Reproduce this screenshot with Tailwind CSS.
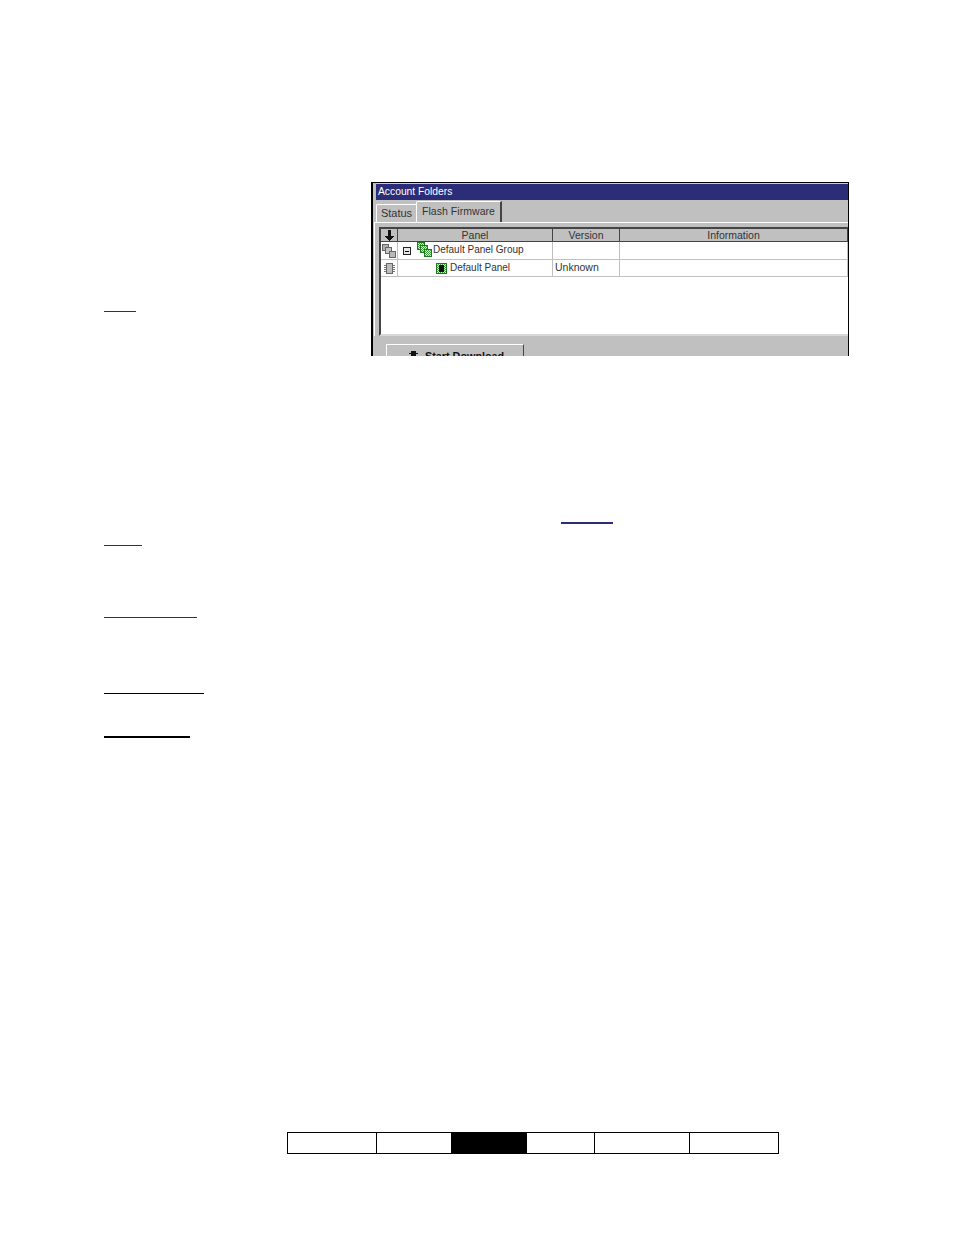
<!DOCTYPE html>
<html>
<head>
<meta charset="utf-8">
<script src="https://cdn.jsdelivr.net/npm/@tailwindcss/browser@4"></script>
</head>
<body class="bg-white">
<svg width="0" height="0" class="absolute">
  <defs>
    <pattern id="g1" width="2" height="2" patternUnits="userSpaceOnUse"><rect width="2" height="2" fill="#3f9f3f"/><rect width="1" height="1" fill="#d8f0d8"/><rect x="1" y="1" width="1" height="1" fill="#d8f0d8"/></pattern>
  </defs>
</svg>
<div class="w-[954px] h-[1235px] bg-white overflow-hidden flex flex-col pt-[182px] pl-[104px] font-['Liberation_Sans',sans-serif]">
  <div class="flex items-start h-[174px]">
    <div class="w-[32px] h-px mt-[129px] bg-[#2b2d78] shrink-0"></div>
    <div class="ml-[235px] w-[478px] h-[174px] shrink-0 overflow-hidden bg-[#c0c0c0] border-t border-l-2 border-r border-black flex flex-col text-[11px] leading-none text-[#333]">
      <div class="h-[17px] ml-[3px] bg-[#2b2d78] text-white text-[10.3px] leading-[16px] pl-[2px] shrink-0 border-t border-[#c8c8d8]">Account Folders</div>
      <div class="h-[22px] shrink-0 flex items-end pl-[3px] box-content">
        <div class="w-[40px] h-[18px] bg-[#c0c0c0] border-t border-l border-white rounded-tl-[2px] text-center leading-[17px]">Status</div>
        <div class="w-[86px] h-[21px] bg-[#c0c0c0] border-t border-l border-white border-r-2 border-r-[#444] rounded-tl-[2px] text-center text-[10.5px] tracking-[0.05px] leading-[19px]">Flash Firmware</div>
      </div>
      <div class="ml-px border-t border-l border-white pt-[4px] pl-[4px] shrink-0">
        <div class="h-[109px] bg-white border-t-2 border-l-2 border-[#444] border-b-2 border-b-[#d8d8d8] flex flex-col text-[10.5px]">
          <div class="flex h-[13px] bg-[#c0c0c0] border-b border-[#444] text-center leading-[12px] shrink-0">
            <div class="w-[17px] border-r border-[#444] flex items-center justify-center shrink-0">
              <svg width="9" height="11" viewBox="0 0 9 11" shape-rendering="crispEdges"><path d="M3 0h3v6h3v1H8v1H7v1H6v1H5v1H4v-1H3V9H2V8H1V7H0V6h3z" fill="#111"/></svg>
            </div>
            <div class="w-[155px] border-r border-[#444] shrink-0">Panel</div>
            <div class="w-[67px] border-r border-[#444] shrink-0">Version</div>
            <div class="flex-1 border-r border-[#444]">Information</div>
          </div>
          <div class="flex h-[18px] border-b border-[#c0c0c0] shrink-0">
            <div class="w-[17px] border-r border-[#c0c0c0] flex items-center justify-center shrink-0">
              <svg width="14" height="14" viewBox="0 0 14 14" shape-rendering="crispEdges"><path d="M.5.500h6v6h-6z" fill="#b0b0b0" stroke="#666"/><path d="M3.500 3.500h6v6h-6z" fill="#c4c4c4" stroke="#666"/><path d="M7.500 7.500h6v6h-6z" fill="#b8b8b8" stroke="#666"/></svg>
            </div>
            <div class="w-[155px] border-r border-[#c0c0c0] flex items-center shrink-0 pl-[5px] pb-[2px] text-[10px]">
              <svg class="mt-[3px]" width="8" height="8" viewBox="0 0 8 8" shape-rendering="crispEdges"><path d="M.5.500h7v7h-7z" fill="#e8e8e8" stroke="#222"/><path d="M2 4h4" stroke="#000"/></svg>
              <svg class="ml-[6px]" width="15" height="15" viewBox="0 0 15 15" shape-rendering="crispEdges"><path d="M.5.500h7v7h-7z" fill="url(#g1)" stroke="#1c7a1c"/><path d="M3.500 3.500h7v7h-7z" fill="url(#g1)" stroke="#1c7a1c"/><path d="M7.500 7.500h7v7h-7z" fill="url(#g1)" stroke="#1c7a1c"/></svg>
              <span class="ml-[1px]">Default Panel Group</span>
            </div>
            <div class="w-[67px] border-r border-[#c0c0c0] shrink-0"></div>
            <div class="flex-1 border-r border-[#c0c0c0]"></div>
          </div>
          <div class="flex h-[17px] border-b border-[#c0c0c0] shrink-0">
            <div class="w-[17px] border-r border-[#c0c0c0] flex items-center justify-center shrink-0">
              <svg width="11" height="11" viewBox="0 0 11 11" shape-rendering="crispEdges"><path d="M2.500.500h6v10h-6z" fill="#bcbcbc" stroke="#666"/><path d="M0 2.500h2M0 4.500h2M0 6.500h2M0 8.500h2M9 2.500h2M9 4.500h2M9 6.500h2M9 8.500h2" stroke="#777"/></svg>
            </div>
            <div class="w-[155px] border-r border-[#c0c0c0] flex items-center shrink-0 pl-[38px] pb-[1px] text-[10px]">
              <svg class="mt-[1px]" width="11" height="11" viewBox="0 0 11 11" shape-rendering="crispEdges"><path d="M.5.500h10v10H.5z" fill="url(#g1)" stroke="#1c7a1c"/><path d="M3 2h5v7H3z" fill="#111"/></svg>
              <span class="ml-[3px]">Default Panel</span>
            </div>
            <div class="w-[67px] border-r border-[#c0c0c0] shrink-0 flex items-center pl-[2px] pb-[1px]">Unknown</div>
            <div class="flex-1 border-r border-[#c0c0c0]"></div>
          </div>
        </div>
      </div>
      <div class="pt-[8px] pl-[13px]">
        <div class="w-[138px] h-[30px] border-t border-l border-white border-r border-r-[#444] flex pt-[6px] pl-[22px] items-start font-bold text-[#111]">
          <svg class="mr-[7px]" width="9" height="12" viewBox="0 0 9 12" shape-rendering="crispEdges"><path d="M2 0h5v12H2zM0 2h9v1H0zM0 5h9v1H0zM0 8h9v1H0z" fill="#111"/></svg>
          <span class="text-[10.8px]">Start Download</span>
        </div>
      </div>
    </div>
  </div>
  <div class="w-[52px] h-[2px] ml-[457px] mt-[166px] bg-[#2b2d78]"></div>
  <div class="w-[38px] h-px mt-[21px] bg-[#2b2d78]"></div>
  <div class="w-[93px] h-px mt-[71px] bg-[#2b2d78]"></div>
  <div class="w-[100px] h-px mt-[75px] bg-black"></div>
  <div class="w-[86px] h-[2px] mt-[42px] bg-black"></div>
  <div class="w-[492px] h-[22px] ml-[183px] mt-[394px] border border-black flex">
    <div class="w-[89px] border-r border-black"></div>
    <div class="w-[74px]"></div>
    <div class="w-[76px] bg-black"></div>
    <div class="w-[68px] border-r border-black"></div>
    <div class="w-[95px] border-r border-black"></div>
    <div class="flex-1"></div>
  </div>
</div>
</body>
</html>
